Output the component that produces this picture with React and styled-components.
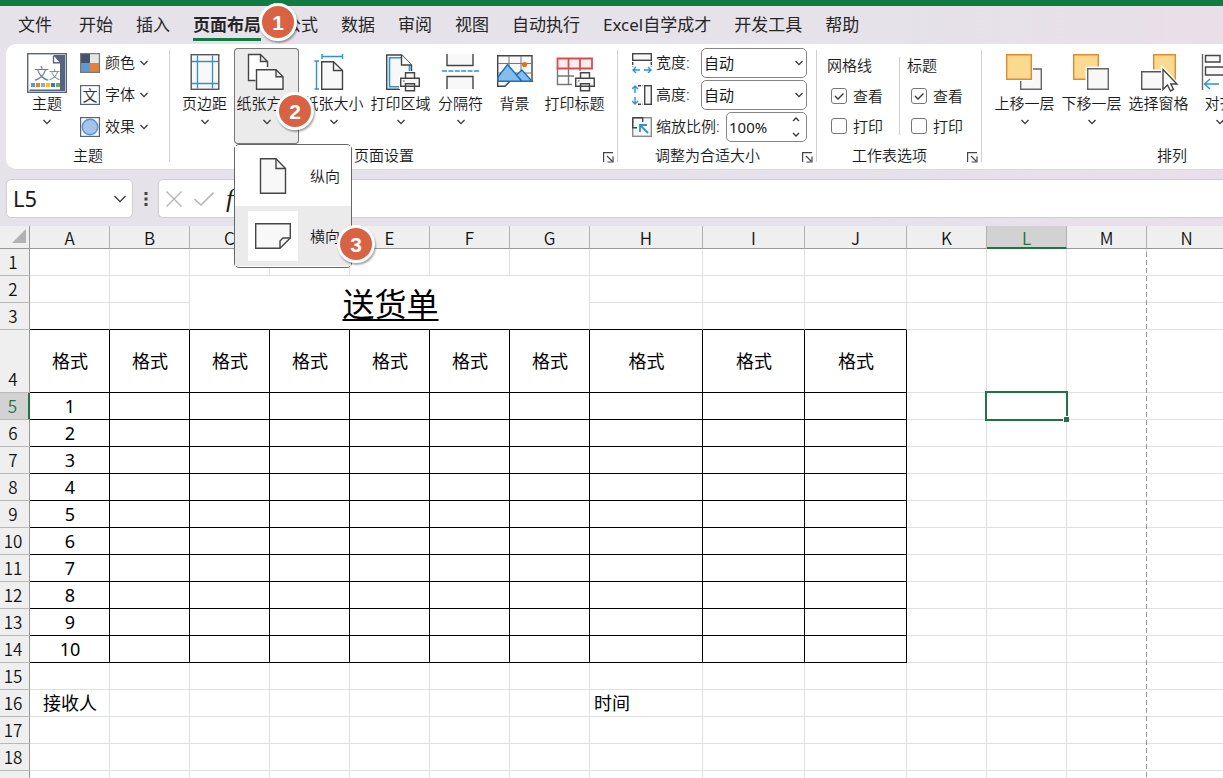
import React from "react";
import styled, { createGlobalStyle, css } from "styled-components";

const GREEN = "#107c41";
const PICK = "#217346";
const BLUE = "#2b93d6";
const INK = "#444";

const Global = createGlobalStyle`
  *, *::before, *::after { box-sizing: border-box; }
  body { margin: 0; background: #fff; overflow: hidden; }
  body, button, input, select {
    font-family: "Noto Sans", "Noto Sans CJK SC", sans-serif;
    font-size: 15px;
    color: #1a1a1a;
  }
  button { border: 0; padding: 0; background: none; cursor: pointer; }
  svg { display: block; flex: none; }
`;

const Window = styled.div`
  display: flex;
  flex-direction: column;
  height: 100vh;
  overflow: hidden;
`;

const Chrome = styled.header`
  border-top: 6px solid ${GREEN};
  background: linear-gradient(90deg, #e5e2e9 0%, #e5e2e9 70%, #e9dfe9 100%);
  font-weight: 350;
`;

const TabBar = styled.nav`
  display: flex;
  gap: 23px;
  height: 38px;
  padding: 4px 18px 0;
`;

const Tab = styled.button`
  position: relative;
  height: 31px;
  font-size: 17px;
  line-height: 30px;
  white-space: nowrap;
  color: #262626;
  font-weight: ${(p) => (p.$active ? 700 : 400)};
  border-bottom: 3px solid ${(p) => (p.$active ? GREEN : "transparent")};
  &:first-child { margin-right: 4px; }
`;

const Badge = styled.span`
  position: absolute;
  z-index: 5;
  display: grid;
  place-items: center;
  width: 38px;
  height: 38px;
  border: 3px solid #fff;
  border-radius: 50%;
  background: #d96243;
  color: #fff;
  font: 700 21px/21px "Liberation Sans", sans-serif;
  box-shadow: 1px 2px 2px rgba(0, 0, 0, 0.35);
  right: ${(p) => p.$right};
  top: ${(p) => p.$top};
`;

const Ribbon = styled.div`
  display: flex;
  height: 126px;
  margin-left: 6px;
  padding: 4px 0 0;
  background: #fff;
  border-bottom: 1px solid #dcdadf;
  border-radius: 10px 0 0 10px;
`;

const Group = styled.section`
  position: relative;
  display: flex;
  flex-direction: column;
  flex: none;
  padding-left: ${(p) => p.$pad};
  width: ${(p) => p.$w};
  &::after {
    content: "";
    position: absolute;
    right: 0;
    top: 2px;
    bottom: 7px;
    border-right: 1px solid #d0d0d0;
  }
`;

const Tools = styled.div`
  display: flex;
  gap: 2px;
  height: 96px;
`;

const GroupFoot = styled.footer`
  display: flex;
  height: 22px;
  margin-left: -${(p) => p.$pad};
`;

const GroupName = styled.span`
  flex: 1;
  text-align: center;
  line-height: 22px;
`;

const Launcher = styled.button`
  display: grid;
  place-items: center;
  width: 20px;
  height: 20px;
  padding: 6px 0 0;
`;

const Big = styled.button`
  position: relative;
  display: flex;
  flex-direction: column;
  align-items: center;
  width: ${(p) => p.$w};
  height: 96px;
  padding-top: 5px;
  border-radius: 4px;
  font-weight: 350;
  white-space: nowrap;
  ${(p) => p.$open && css`
    background: #ebebeb;
    box-shadow: inset 0 0 0 1px #777;
  `}
`;

const BigLabel = styled.span`
  line-height: 20px;
  margin-bottom: 6px;
`;

const Anchor = styled.div`
  position: relative;
`;

const Menu = styled.div`
  position: absolute;
  z-index: 4;
  left: 0;
  top: 96px;
  width: 118px;
  padding: 1px 0;
  background: #fff;
  border: 1px solid #666;
  border-radius: 5px;
`;

const MenuItem = styled.button`
  position: relative;
  display: flex;
  align-items: center;
  gap: 12px;
  width: 100%;
  height: 60px;
  padding-left: 13px;
  font-weight: 350;
  background: ${(p) => (p.$hot ? "#ebebeb" : "#fff")};
`;

const MenuIcon = styled.span`
  display: grid;
  place-items: center;
  width: 50px;
  height: 50px;
  background: #fff;
`;

const Stack = styled.div`
  display: flex;
  flex-direction: column;
  gap: 2px;
  width: ${(p) => p.$w || "auto"};
`;

const Small = styled.button`
  display: flex;
  align-items: center;
  gap: 5px;
  height: 30px;
  line-height: 20px;
  font-weight: 350;
`;

const Field = styled.label`
  display: flex;
  align-items: center;
  gap: 4px;
  height: 30px;
  line-height: 20px;
  white-space: nowrap;
`;

const Caption = styled.span`
  padding-bottom: 2px;
`;

const Box = styled.span`
  position: relative;
  display: block;
  width: ${(p) => p.$w};
  height: 30px;
  margin-left: auto;
  & > svg { position: absolute; right: 4px; top: 50%; transform: translateY(-50%); pointer-events: none; }
`;

const boxed = css`
  appearance: none;
  width: 100%;
  height: 30px;
  padding: 0 2px;
  border: 1px solid #868686;
  border-radius: 5px;
  background: #fff;
  outline: 0;
  font-weight: 400;
`;
const Select = styled.select`${boxed}`;
const Input = styled.input`${boxed}`;

const CheckCol = styled.div`
  position: relative;
  width: ${(p) => (p.$rule ? "78px" : "70px")};
  padding-top: 8px;
  ${(p) => p.$rule && css`
    &::after {
      content: "";
      position: absolute;
      top: 9px;
      bottom: 9px;
      right: 5px;
      border-right: 1px solid #d0d0d0;
    }
  `}
`;

const ColTitle = styled.span`
  display: block;
  line-height: 18px;
  margin-bottom: 7px;
`;

const Check = styled.label`
  display: flex;
  align-items: center;
  gap: 6px;
  height: 30px;
  padding-left: 4px;
  line-height: 20px;
`;

const Tick = styled.span`
  position: relative;
  width: 16px;
  height: 16px;
  & > input {
    appearance: none;
    display: block;
    width: 16px;
    height: 16px;
    margin: 0;
    border: 1px solid #777;
    border-radius: 3px;
    background: #fff;
  }
  & > svg { position: absolute; left: 0; top: 0; pointer-events: none; display: none; }
  & > input:checked + svg { display: block; }
`;

const FormulaRow = styled.div`
  display: flex;
  align-items: center;
  height: 56px;
  padding: 1px 0 0 6px;
`;

const NameBox = styled.div`
  display: flex;
  align-items: center;
  width: 127px;
  height: 39px;
  padding: 0 6px;
  border: 1px solid #cfcdd2;
  border-radius: 5px;
  background: #fff;
`;

const NameInput = styled.input`
  flex: 1;
  min-width: 0;
  height: 34px;
  padding: 0 0 2px;
  border: 0;
  outline: 0;
  background: none;
  font-size: 22px;
`;

const Dots = styled.span`
  display: grid;
  place-items: center;
  width: 25px;
`;

const FormulaBox = styled.div`
  display: flex;
  align-items: center;
  gap: 12px;
  flex: 1;
  height: 39px;
  padding-left: 7px;
  border: 1px solid #cfcdd2;
  border-right: 0;
  border-radius: 5px 0 0 5px;
  background: #fff;
`;

const Fx = styled.button`
  display: flex;
  gap: 3px;
  font: italic 26px/30px "Liberation Serif", serif;
`;

const FormulaInput = styled.input`
  flex: 1;
  height: 34px;
  border: 0;
  outline: 0;
`;

const Sheet = styled.main`
  flex: 1;
  min-height: 0;
  overflow: hidden;
`;

const Grid = styled.table`
  width: 100%;
  min-width: 1227px;
  table-layout: fixed;
  border-collapse: separate;
  border-spacing: 0;
  color: #000;
`;

const headFont = css`
  font: 350 17px/18px "Noto Sans CJK SC", sans-serif;
  background: ${(p) => (p.$on ? "#d2d2d2" : "#efefef")};
  color: ${(p) => (p.$on ? PICK : "#111")};
`;

const ColHead = styled.th`
  ${headFont}
  height: 23px;
  padding: 2px 0 0;
  border-right: 1px solid #b0b0b0;
  border-bottom: ${(p) => (p.$on ? `2px solid ${PICK}` : "1px solid #999")};
`;

const Corner = styled.th`
  padding: 0 3px 2px 0;
  background: #efefef;
  border-right: 1px solid #999;
  border-bottom: 1px solid #999;
  & > svg { margin-left: auto; }
`;

const RowHead = styled.th`
  ${headFont}
  padding: 0 3px 4px 0;
  vertical-align: bottom;
  border-right: ${(p) => (p.$on ? `2px solid ${PICK}` : "1px solid #999")};
  border-bottom: 1px solid #b8b8b8;
`;

const Row = styled.tr`
  height: ${(p) => (p.$tall ? "63px" : "27px")};
`;

const Cell = styled.td`
  position: relative;
  padding: 0 3px 1px 4px;
  font-size: 18px;
  line-height: 24px;
  white-space: nowrap;
  text-align: ${(p) => p.$align || "center"};
  border-right: 1px solid ${(p) => (p.$right ? "#000" : "#e0e0e0")};
  border-bottom: 1px solid ${(p) => (p.$bottom ? "#000" : "#e0e0e0")};
`;

const Title = styled(Cell)`
  padding: 2px 2px 0 4px;
  font-size: 32px;
  line-height: 50px;
  text-decoration: underline;
  text-decoration-thickness: 2px;
  text-underline-offset: 3px;
`;

const Cursor = styled.span`
  position: absolute;
  z-index: 1;
  inset: -2px;
  border: 2px solid ${PICK};
  &::after {
    content: "";
    position: absolute;
    right: -3px;
    bottom: -3px;
    width: 6px;
    height: 6px;
    background: ${PICK};
    border: solid #fff;
    border-width: 1px 0 0 1px;
  }
`;

const PageBreak = styled.span`
  position: absolute;
  z-index: 1;
  top: 3px;
  right: -1px;
  width: 1px;
  height: 100vh;
  background: repeating-linear-gradient(#999 0 5px, #fff 5px 8px);
`;

/* ---------- icons ---------- */

const Chevron = ({ w = 8 }) => (
  <svg width={w} height={w / 2 + 2} viewBox={`0 0 ${w} ${w / 2 + 2}`} fill="none" stroke="#333" strokeWidth="1.3">
    <path d={`M.5 1 L${w / 2} ${w / 2 + 0.6} L${w - 0.5} 1`} />
  </svg>
);

const Ico = ({ children, w = 40, h = 40 }) => (
  <svg width={w} height={h} viewBox={`0 0 ${w} ${h}`} fill="none" stroke={INK} strokeWidth="1.4">
    {children}
  </svg>
);

const Printer = ({ x, y }) => (
  <g transform={`translate(${x} ${y})`}>
    <path d="M4 -1H16V5H21V17H16V20H4V17H-1V5H4Z" fill="#fff" stroke="none" />
    <path d="M5.5 6V.7H14.5V6M.7 6.3H19.3V14.3H.7ZM5.5 11.7H14.5V18.7H5.5Z" fill="#f8f8f8" />
    <path d="M3 9h1.5" strokeWidth="1" />
  </g>
);

const icons = {
  theme: (
    <Ico>
      <rect x=".7" y=".7" width="38.6" height="38.6" stroke="#56657f" fill="#fff" />
      <path d="M26 2H38V38H2.5V36.5H33V10Z" fill="#56657f" stroke="none" />
      <path d="M2.7 2.7H26L33 10V36H2.7Z" fill="#fff" stroke="none" />
      <path d="M26.5 3V9.7H33" stroke="#56657f" />
      <g fill="#6d7b91" stroke="none" fontFamily="Noto Sans CJK SC" fontWeight="350">
        <text x="7" y="26" fontSize="15">文</text>
        <text x="22" y="26" fontSize="11">文</text>
      </g>
      {["#5b9bd5", "#ed7d31", "#a5a5a5", "#ffc000", "#4472c4", "#70ad47"].map((c, i) => (
        <rect key={c} x={4 + i * 5} y="30" width="4" height="4" fill={c} stroke="none" />
      ))}
    </Ico>
  ),
  colors: (
    <Ico w={20} h={20}>
      <g stroke="none">
        <path d="M0 0H10V10H0Z" fill="#44546a" /><path d="M10 0H20V10H10Z" fill="#e7e6e6" />
        <path d="M0 10H10V20H0Z" fill="#5b9bd5" /><path d="M10 10H20V20H10Z" fill="#ed7d31" />
      </g>
      <rect x=".6" y=".6" width="18.8" height="18.8" stroke="#777" strokeWidth="1.2" />
    </Ico>
  ),
  fonts: (
    <Ico w={20} h={20}>
      <rect x=".6" y=".6" width="18.8" height="18.8" stroke="#56657f" strokeWidth="1.2" fill="#fff" />
      <text x="2.5" y="15.5" fontSize="15" fill="#333" stroke="none" fontFamily="Noto Sans CJK SC" fontWeight="350">文</text>
    </Ico>
  ),
  effects: (
    <Ico w={20} h={20}>
      <rect x=".6" y=".6" width="18.8" height="18.8" stroke="#56657f" strokeWidth="1.2" fill="#fff" />
      <circle cx="10" cy="10" r="7.8" fill="#a3c4ec" stroke="#5a8fd0" />
    </Ico>
  ),
  margins: (
    <Ico>
      <rect x="6.2" y="1.7" width="27.6" height="34.6" fill="#f8f8f8" stroke="#555" />
      <path d="M12.5 2.5V35.5M27.5 2.5V35.5M7 8.5H33M7 30.5H33" stroke={BLUE} strokeWidth="1.3" />
    </Ico>
  ),
  orient: (
    <Ico>
      <path d="M8.5 27.5H1.5V1.5H13.5L20.5 8.5V14M13.5 1.5V8.5H20.5" fill="#fff" />
      <path d="M9.5 16.7H29L36 23.7V36.3H9.5Z" fill="#f8f8f8" />
      <path d="M29 16.7V23.7H36" />
    </Ico>
  ),
  size: (
    <Ico>
      <path d="M8 3.5H28.5M8 1V6M28.5 1V6M2.5 8V36M.5 8H5M.5 36H5" stroke={BLUE} />
      <path d="M7.7 8.7H19.5L28.5 17.5V36.3H7.7Z" fill="#f8f8f8" />
      <path d="M19.5 8.7V17.5H28.5" />
    </Ico>
  ),
  area: (
    <Ico>
      <path d="M19 36.3H5.7V2H20.5L30.5 12V19" fill="#f8f8f8" />
      <path d="M20 4.7H8.5V33.7H19M28.5 12V19" stroke={BLUE} strokeWidth="1.6" />
      <path d="M20.5 2V12H30.5" fill="#fff" />
      <Printer x={19} y={19} />
    </Ico>
  ),
  breaks: (
    <Ico>
      <path d="M6 1V12.5H32V1M6 36V23.5H32V36" fill="#f8f8f8" />
      <path d="M1 18H38" stroke={BLUE} strokeDasharray="5 1.4" />
    </Ico>
  ),
  background: (
    <Ico>
      <path d="M2.7 27V2.7H37V28.3H15L10 33.3H2.7V27Z" fill="#f8f8f8" />
      <path d="M14 3V28M26 3V28M3 10.5H37M3 20H37" strokeWidth="1" stroke="#777" />
      <path d="M3 24L12.5 11.5L27 28.3H3Z" fill="#83beec" stroke="#1a6fb9" />
      <path d="M21.5 22L27 17L37 28.3H27Z" fill="#83beec" stroke="#1a6fb9" />
      <circle cx="29.5" cy="11.5" r="2.6" fill="#e8700d" stroke="none" />
    </Ico>
  ),
  titles: (
    <Ico>
      <path d="M2.5 15V31.5H17M13.5 15V31.5M25 15V19M2.5 23H19" stroke="#777" />
      <path d="M2.5 5.5H37V15.5H2.5ZM13.5 5.5V15.5M25 5.5V15.5" fill="#fbeeee" stroke="#dd4a4e" strokeWidth="1.8" />
      <Printer x={20} y={19} />
    </Ico>
  ),
  forward: (
    <Ico>
      <path d="M15.7 16H36.3V36.3H15.7Z" fill="#f8f8f8" stroke="#666" />
      <path d="M0 0H28V28H0Z" fill="#fff" stroke="none" />
      <path d="M1.7 1.7H26.3V26.3H1.7Z" fill="#f9da8e" stroke="#e8882b" />
    </Ico>
  ),
  backward: (
    <Ico>
      <path d="M1.7 1.7H26.3V26.3H1.7Z" fill="#f9da8e" stroke="#e8882b" />
      <path d="M13.5 13.5H39V38H13.5Z" fill="#fff" stroke="none" />
      <path d="M15.7 15.7H36.3V36.3H15.7Z" fill="#f8f8f8" stroke="#666" />
    </Ico>
  ),
  pane: (
    <Ico>
      <path d="M14.7 1.7H36.3V26.3H14.7Z" fill="#f9da8e" stroke="#e8882b" />
      <path d="M1 16.5H25V38H1Z" fill="#fff" stroke="none" />
      <path d="M2.7 18.7H24V36.3H2.7Z" fill="#f8f8f8" stroke="#555" />
      <path d="M24 16.5V36.5L28.5 32L31.5 38L34.5 36.5L31.8 31H38Z" fill="#fff" stroke="#fff" strokeWidth="4" />
      <path d="M24 16.5V36.5L28.5 32L31.5 38L34.5 36.5L31.8 31H38Z" fill="#fff" />
    </Ico>
  ),
  align: (
    <Ico>
      <path d="M2.5 1V37" stroke="#666" />
      <path d="M5.5 2.5H20V9H5.5ZM5.5 14H32V22H5.5Z" fill="#f8f8f8" />
      <path d="M19 31H5M10 26L4.5 31L10 36" stroke={BLUE} />
    </Ico>
  ),
  width: (
    <Ico w={20} h={20}>
      <rect x=".7" y=".7" width="18.6" height="6.6" fill="#f8f8f8" />
      <path d="M.7 9V14M19.3 9V14" strokeDasharray="3 1.5" />
      <path d="M1 17H8M12 17H19M4 14L1 17L4 20M16 14L19 17L16 20" stroke={BLUE} />
    </Ico>
  ),
  height: (
    <Ico w={20} h={20}>
      <rect x="12.7" y=".7" width="6.6" height="18.6" fill="#f8f8f8" />
      <path d="M6 .7H11M6 19.3H11" strokeDasharray="3 1.5" />
      <path d="M3 1V8M3 12V19M0 4L3 1L6 4M0 16L3 19L6 16" stroke={BLUE} />
    </Ico>
  ),
  scale: (
    <Ico w={20} h={20}>
      <rect x=".7" y=".7" width="18.6" height="18.6" stroke="#8a8a8a" fill="#f8f8f8" />
      <path d="M.7 .7H10.7V5M.7 .7V10.7H5" />
      <path d="M16 16L8 8M8 15V8H15" stroke={BLUE} strokeWidth="1.8" />
    </Ico>
  ),
};

const LaunchIcon = () => (
  <svg width="11" height="11" viewBox="0 0 11 11" fill="none" stroke="#444" strokeWidth="1.2">
    <path d="M.6 10V.6H10M4 4L9 9M10 4.5V10H4.5" />
  </svg>
);

/* ---------- ribbon parts ---------- */

const BigButton = ({ icon, label, w, arrow = true, open, children }) => (
  <Big $w={w} $open={open} aria-expanded={open}>
    {icons[icon]}
    <BigLabel>{label}</BigLabel>
    {arrow && <Chevron />}
    {children}
  </Big>
);

const RibbonGroup = ({ name, w, pad, launcher, children }) => (
  <Group $w={w} $pad={pad}>
    <Tools>{children}</Tools>
    <GroupFoot $pad={pad}>
      <GroupName>{name}</GroupName>
      {launcher && <Launcher aria-label={name}><LaunchIcon /></Launcher>}
    </GroupFoot>
  </Group>
);

const CheckItem = ({ label, on }) => (
  <Check>
    <Tick>
      <input type="checkbox" defaultChecked={on} />
      <svg width="16" height="16" viewBox="0 0 16 16" fill="none" stroke="#333" strokeWidth="1.4"><path d="M4 8L7 11L12.5 5.5" /></svg>
    </Tick>
    {label}
  </Check>
);

const tabs = ["文件", "开始", "插入", "页面布局", "公式", "数据", "审阅", "视图", "自动执行", "Excel自学成才", "开发工具", "帮助"];

/* ---------- sheet ---------- */

const columns = [
  ["A", 80], ["B", 80], ["C", 80], ["D", 80], ["E", 80], ["F", 80], ["G", 80],
  ["H", 113], ["I", 102], ["J", 102], ["K", 80], ["L", 80], ["M", 80], ["N", null],
];
const rowNumbers = Array.from({ length: 19 }, (_, i) => i + 1);

const textAt = (col, row) => {
  if (row === 4 && col < 10) return "格式";
  if (col === 0 && row >= 5 && row <= 14) return row - 4;
  if (row === 16 && col === 0) return "接收人";
  if (row === 16 && col === 7) return "时间";
  return null;
};

const SheetRow = ({ row }) => (
  <Row $tall={row === 4}>
    <RowHead scope="row" $on={row === 5}>{row < 19 ? row : null}</RowHead>
    {columns.map(([name], col) => {
      if ((row === 2 || row === 3) && col >= 2 && col <= 6) {
        return row === 2 && col === 2
          ? <Title key={name} colSpan={5} rowSpan={2} $bottom>送货单</Title>
          : null;
      }
      const inForm = col < 10;
      return (
        <Cell
          key={name}
          $align={col === 7 && row === 16 ? "left" : "center"}
          $right={inForm && row >= 4 && row <= 14}
          $bottom={inForm && row >= 3 && row <= 14}
        >
          {textAt(col, row)}
          {name === "L" && row === 5 && <Cursor />}
          {name === "M" && row === 1 && <PageBreak />}
        </Cell>
      );
    })}
  </Row>
);

export default function App() {
  return (
    <Window lang="zh-CN">
      <Global />
      <Chrome>
        <TabBar>
          {tabs.map((t) => (
            <Tab key={t} $active={t === "页面布局"}>
              {t}
              {t === "页面布局" && <Badge $right="-36px" $top="-7px">1</Badge>}
            </Tab>
          ))}
        </TabBar>

        <Ribbon>
          <RibbonGroup name="主题" w="164px" pad="10px">
            <BigButton icon="theme" label="主题" w="62px" />
            <Stack>
              {[["colors", "颜色"], ["fonts", "字体"], ["effects", "效果"]].map(([i, l]) => (
                <Small key={i}>{icons[i]}<Caption>{l}</Caption><Chevron /></Small>
              ))}
            </Stack>
          </RibbonGroup>

          <RibbonGroup name="页面设置" w="448px" pad="7px" launcher>
            <BigButton icon="margins" label="页边距" w="55px" />
            <Anchor>
              <BigButton icon="orient" label="纸张方向" w="65px" open>
                <Badge $right="-15px" $top="44px">2</Badge>
              </BigButton>
              <Menu role="menu">
                <MenuItem role="menuitem">
                  <MenuIcon>
                    <Ico w={28} h={36}>
                      <path d="M1.5 .7H17L26.5 10.5V35.3H1.5Z" fill="#f8f8f8" />
                      <path d="M17 .7V10.5H26.5" />
                    </Ico>
                  </MenuIcon>
                  <Caption>纵向</Caption>
                </MenuItem>
                <MenuItem role="menuitem" $hot>
                  <MenuIcon>
                    <Ico w={36} h={26}>
                      <path d="M.7 .7H35.3V15L25 25.3H.7Z" fill="#f8f8f8" />
                      <path d="M35.3 15H28L25 18V25.3" />
                    </Ico>
                  </MenuIcon>
                  <Caption>横向</Caption>
                  <Badge $right="-24px" $top="19px">3</Badge>
                </MenuItem>
              </Menu>
            </Anchor>
            <BigButton icon="size" label="纸张大小" w="65px" />
            <BigButton icon="area" label="打印区域" w="65px" />
            <BigButton icon="breaks" label="分隔符" w="51px" />
            <BigButton icon="background" label="背景" w="53px" arrow={false} />
            <BigButton icon="titles" label="打印标题" w="63px" arrow={false} />
          </RibbonGroup>

          <RibbonGroup name="调整为合适大小" w="199px" pad="14px" launcher>
            <Stack $w="175px">
              {[["width", "宽度:"], ["height", "高度:"]].map(([i, l]) => (
                <Field key={i}>
                  {icons[i]}
                  <Caption>{l}</Caption>
                  <Box $w="106px">
                    <Select defaultValue="自动"><option>自动</option></Select>
                    <Chevron />
                  </Box>
                </Field>
              ))}
              <Field>
                {icons.scale}
                <Caption>缩放比例:</Caption>
                <Box $w="81px">
                  <Input defaultValue="100%" />
                  <svg width="14" height="22" viewBox="0 0 14 22" fill="none" stroke="#333" strokeWidth="1.3">
                    <path d="M4 5L7 2L10 5M4 17L7 20L10 17" />
                  </svg>
                </Box>
              </Field>
            </Stack>
          </RibbonGroup>

          <RibbonGroup name="工作表选项" w="165px" pad="10px" launcher>
            <CheckCol $rule>
              <ColTitle>网格线</ColTitle>
              <CheckItem label="查看" on />
              <CheckItem label="打印" />
            </CheckCol>
            <CheckCol>
              <ColTitle>标题</ColTitle>
              <CheckItem label="查看" on />
              <CheckItem label="打印" />
            </CheckCol>
          </RibbonGroup>

          <RibbonGroup name="排列" w="380px" pad="10px">
            <BigButton icon="forward" label="上移一层" w="65px" />
            <BigButton icon="backward" label="下移一层" w="65px" />
            <BigButton icon="pane" label="选择窗格" w="65px" arrow={false} />
            <BigButton icon="align" label="对齐" w="53px" />
          </RibbonGroup>
        </Ribbon>

        <FormulaRow>
          <NameBox>
            <NameInput aria-label="L5" defaultValue="L5" />
            <Chevron w={12} />
          </NameBox>
          <Dots>
            <svg width="4" height="16" viewBox="0 0 4 16" fill="#444"><path d="M.5 1h3v3h-3zM.5 6.5h3v3h-3zM.5 12h3v3h-3z" /></svg>
          </Dots>
          <FormulaBox>
            <svg width="16" height="16" viewBox="0 0 16 16" stroke="#b5b5b5" strokeWidth="1.4"><path d="M.5 .5L15.5 15.5M15.5 .5L.5 15.5" /></svg>
            <svg width="20" height="16" viewBox="0 0 20 16" fill="none" stroke="#b5b5b5" strokeWidth="1.6"><path d="M.5 8L7 14L19.5 1.5" /></svg>
            <Fx><span>f</span><span>x</span></Fx>
            <FormulaInput aria-label="fx" />
          </FormulaBox>
        </FormulaRow>
      </Chrome>

      <Sheet>
        <Grid>
          <colgroup>
            <col width="30" />
            {columns.map(([name, w]) => <col key={name} width={w || undefined} />)}
          </colgroup>
          <thead>
            <tr>
              <Corner>
                <svg width="14" height="14" viewBox="0 0 14 14" fill="#b2b2b2"><path d="M14 0V14H0Z" /></svg>
              </Corner>
              {columns.map(([name]) => <ColHead key={name} scope="col" $on={name === "L"}>{name}</ColHead>)}
            </tr>
          </thead>
          <tbody>
            {rowNumbers.map((n) => <SheetRow key={n} row={n} />)}
          </tbody>
        </Grid>
      </Sheet>
    </Window>
  );
}
